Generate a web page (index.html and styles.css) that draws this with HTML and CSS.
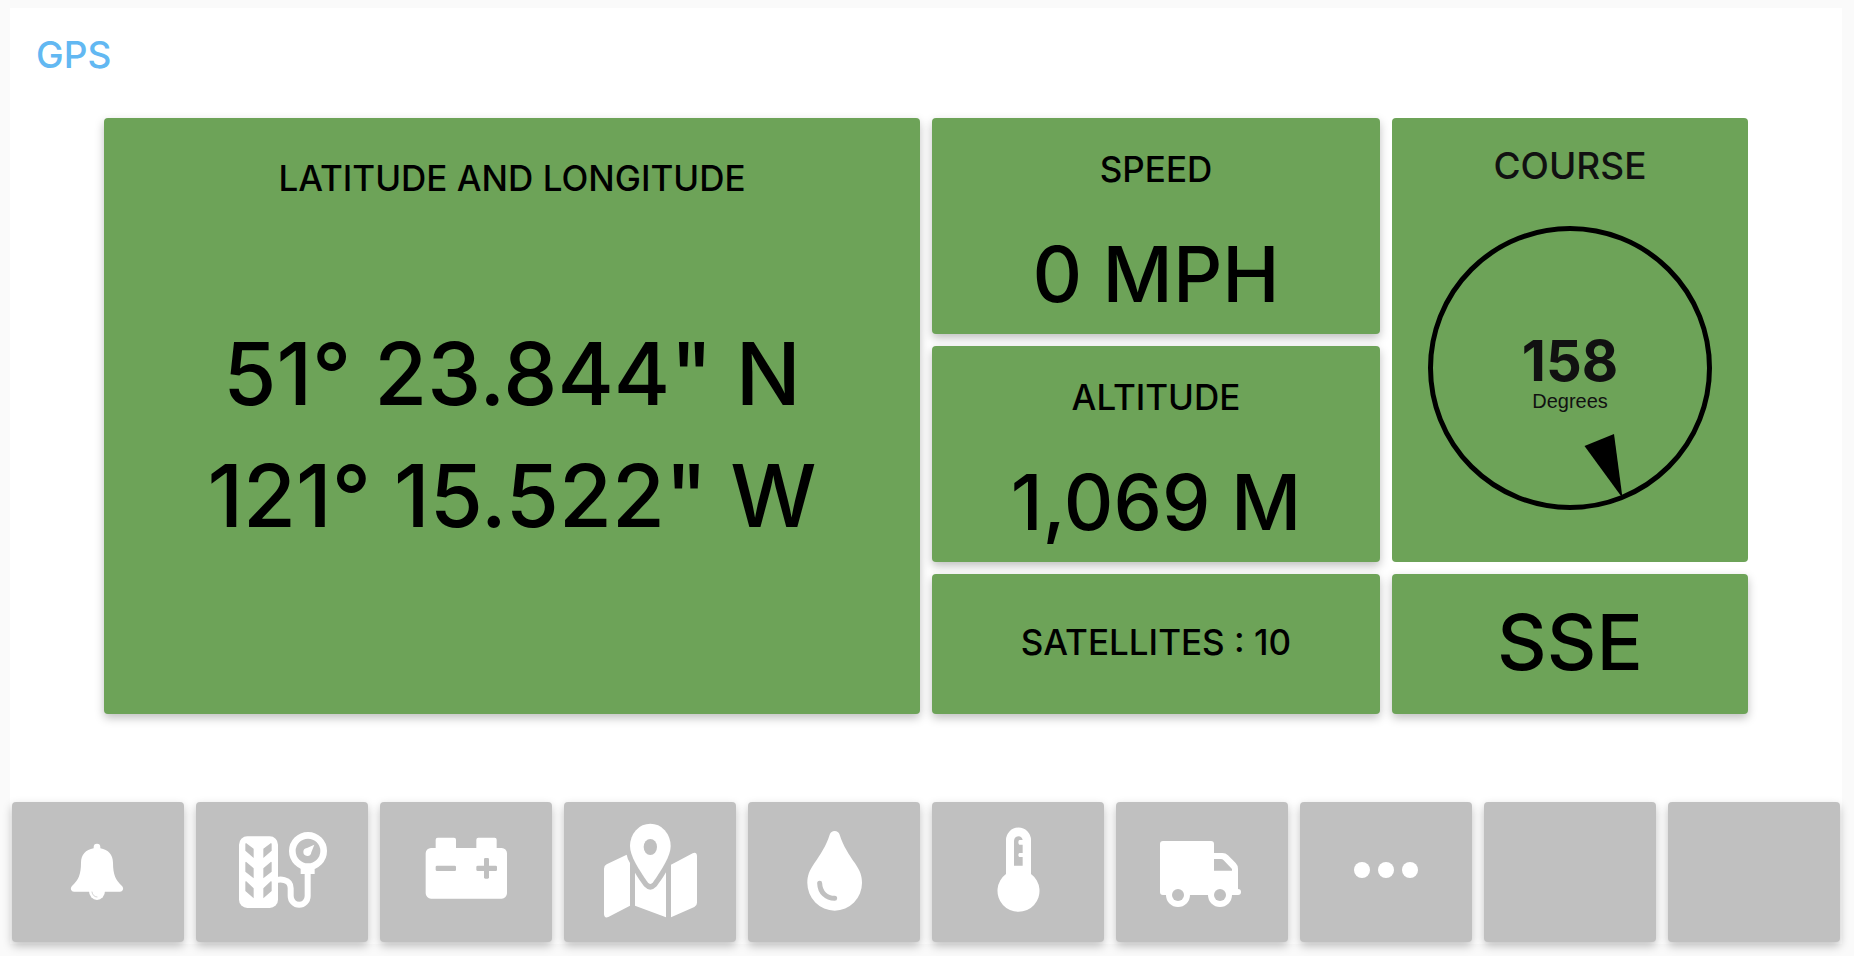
FILE: index.html
```html
<!DOCTYPE html>
<html lang="en">
<head>
    <meta charset="UTF-8">
    <title>GPS</title>
    <link rel="stylesheet" href="styles.css">
</head>
<body>
    <main class="screen">
        <header class="screen-header">
            <h1 class="screen-title">GPS</h1>
        </header>

        <section class="gauges">
            <div class="card position">
                <h2 class="card-title">LATITUDE AND LONGITUDE</h2>
                <div class="coordinates">
                    <div>51° 23.844" N</div>
                    <div>121° 15.522" W</div>
                </div>
            </div>

            <div class="card reading">
                <h2 class="card-title">SPEED</h2>
                <div class="value">0 MPH</div>
            </div>

            <div class="card course">
                <h2 class="course-title">COURSE</h2>
                <div class="compass">
                    <svg class="compass-dial" viewBox="0 0 284 284">
                        <circle cx="142" cy="142" r="139.5" fill="none" stroke="#000" stroke-width="5"/>
                        <path d="M156.500 220L186 208L194.500 272z"/>
                    </svg>
                    <div class="compass-label">
                        <div class="heading">158</div>
                        <div class="unit">Degrees</div>
                    </div>
                </div>
            </div>

            <div class="card reading">
                <h2 class="card-title">ALTITUDE</h2>
                <div class="value">1,069 M</div>
            </div>

            <div class="card centered">
                <div class="satellites">SATELLITES : 10</div>
            </div>

            <div class="card centered">
                <div class="value">SSE</div>
            </div>
        </section>

        <nav class="toolbar">
            <button class="tool" aria-label="Alerts">
                <svg class="icon" viewBox="144 96 300 300">
                    <path d="M291 161a10 10 0 0 1 10 10v4c24 4 38 20 38 43c0 36 8 52 27 70c7 8 2 17-6 17H222c-8 0-13-9-6-17c19-18 27-34 27-70c0-23 14-39 38-43v-4a10 10 0 0 1 10-10z"/>
                    <path d="M267 303h48a24 27 0 0 1-48 0z"/>
                    <path class="cut-line" stroke-width="2" d="M276 306q2 14 15 15"/>
                </svg>
            </button>
            <button class="tool" aria-label="Tire pressure">
                <svg class="icon" viewBox="696 96 300 300">
                    <rect x="717" y="139" width="117" height="215" rx="25"/>
                    <path class="cut" d="M738 159l23 17v28l-25-22v-21zM738 215l23 20v30l-25-20v-28zM738 273l23 22v30l-25-22v-28zM813 159l-23 17v28l25-22v-21zM813 215l-23 20v30l25-20v-28zM813 273l-23 22v30l25-22v-28z"/>
                    <circle cx="924" cy="183" r="47" fill="none" stroke="#fff" stroke-width="20"/>
                    <path d="M943 164l-9 23a12 12 0 1 1-13-13zM902 229h42v23h-42z"/>
                    <path fill="none" stroke="#fff" stroke-width="18" d="M825 273c12-7 47-7 47 22v23a25 26 0 0 0 51 0v-68"/>
                </svg>
            </button>
            <button class="tool" aria-label="Battery">
                <svg class="icon" viewBox="138 96 300 300">
                    <path d="M203 143h49a6 6 0 0 1 6 6v25h61v-25a6 6 0 0 1 6-6h49a6 6 0 0 1 6 6v25h15a16 16 0 0 1 16 16v120a16 16 0 0 1-16 16H183a16 16 0 0 1-16-16V190a16 16 0 0 1 16-16h14v-25a6 6 0 0 1 6-6z"/>
                    <rect class="cut" x="197" y="227" width="61" height="16" rx="4"/>
                    <rect class="cut" x="319" y="227" width="62" height="16" rx="4"/>
                    <rect class="cut" x="342" y="204" width="15" height="62" rx="4"/>
                </svg>
            </button>
            <button class="tool" aria-label="Map">
                <svg class="icon" viewBox="690 96 300 300">
                    <path d="M841 101a61 67 0 0 1 61 67c0 30-26 70-53 109q-8 10-16 0c-27-39-53-79-53-109a61 67 0 0 1 61-67z"/>
                    <ellipse class="cut" cx="841" cy="171" rx="20" ry="24"/>
                    <path d="M770 194q2 12 10 25v128l-65 34q-12 5-13-8V236q0-9 8-13zM795 248c8 14 18 28 27 41q19 20 38 0c10-14 19-26 28-42v135l-93-35zM903 224l65-34q12-5 13 8v140q0 9-8 13l-70 31z"/>
                </svg>
            </button>
            <button class="tool" aria-label="Water">
                <svg class="icon" viewBox="132 96 300 300">
                    <path d="M269 134q4-11 15-11t15 11c11 35 27 57 46 86c15 22 21 37 21 59a82 83 0 0 1-164 0c0-22 6-37 21-59c19-29 35-51 46-86z"/>
                    <path class="cut-line" stroke-width="15" d="M239 280c1 28 20 44 45 45"/>
                </svg>
            </button>
            <button class="tool" aria-label="Temperature">
                <svg class="icon" viewBox="684 96 300 300">
                    <path d="M798 150a37 37 0 0 1 75 0v102a63 63 0 1 1-75 0z"/>
                    <path class="cut" d="M822 227v-75q2-13 14-13q9 0 12 11h-10q-3 1-3 7t3 7h10v25h-10q-3 1-3 6t3 6h10v26z"/>
                </svg>
            </button>
            <button class="tool" aria-label="Vehicle">
                <svg class="icon" viewBox="126 96 300 300">
                    <path fill-rule="evenodd" d="M159 153h144a9 9 0 0 1 9 9v27h25q10 0 17 7l23 23q7 7 7 18v60a9 9 0 0 1 0 18H159a9 9 0 0 1-9-9V162a9 9 0 0 1 9-9zM312 207v35h54v-5l-25-26q-4-4-8-4z"/>
                    <circle cx="204" cy="315" r="36"/>
                    <circle cx="330" cy="315" r="36"/>
                    <circle class="cut" cx="204" cy="315" r="18"/>
                    <circle class="cut" cx="330" cy="315" r="18"/>
                </svg>
            </button>
            <button class="tool" aria-label="More">
                <svg class="icon" viewBox="678 96 300 300">
                    <circle cx="756" cy="240" r="24"/>
                    <circle cx="828" cy="240" r="24"/>
                    <circle cx="900" cy="240" r="24"/>
                </svg>
            </button>
            <button class="tool" aria-label="Empty slot"></button>
            <button class="tool" aria-label="Empty slot"></button>
        </nav>
    </main>
</body>
</html>
```
FILE: styles.css
```css
* {
    box-sizing: border-box;
}
body {
    margin: 0;
    padding: 8px 12px 12px 10px;
    background-color: #fafafa;
    color: #000;
    font-family: Inter, "Liberation Sans", sans-serif;
    font-weight: 500;
}
h1, h2 {
    margin: 0;
    font-weight: 500;
}
.screen {
    display: flex;
    flex-direction: column;
    min-height: calc(100vh - 20px);
    background-color: #fff;
}
.screen-header {
    padding: 24px 26px 40px;
}
.screen-title {
    font-size: 37px;
    line-height: 46px;
    color: #62b8f2;
}
.gauges {
    display: grid;
    grid-template-columns: 816fr 448fr 356fr;
    grid-template-rows: 216px 216px 140px;
    gap: 12px;
    margin: 0 94px;
}
.card {
    display: flex;
    flex-direction: column;
    align-items: center;
    background-color: #6da358;
    border-radius: 4px;
    box-shadow: 0 4px 10px rgba(0, 0, 0, 0.25);
}
.card-title,
.satellites {
    font-size: 35px;
    line-height: 56px;
}
.position {
    grid-row: span 3;
    padding: 32px 0 50px;
}
.coordinates {
    display: flex;
    flex: 1;
    flex-direction: column;
    justify-content: center;
    font-size: 86px;
    line-height: 122px;
    text-align: center;
}
.reading {
    padding-top: 23px;
    gap: 27px;
}
.centered {
    justify-content: center;
    padding-bottom: 4px;
}
.value {
    font-size: 77px;
    line-height: 100px;
}
.course {
    grid-row: span 2;
    padding-top: 20px;
    gap: 32px;
    box-shadow: none;
    color: #111;
}
.course-title {
    font-size: 37px;
    line-height: 56px;
}
.compass {
    display: grid;
    width: 284px;
    height: 284px;
}
.compass-dial,
.compass-label {
    grid-area: 1 / 1;
}
.compass-label {
    padding-top: 105px;
    text-align: center;
}
.heading {
    font-size: 56px;
    font-weight: 700;
    line-height: 60px;
}
.unit {
    font-family: "Liberation Sans", Arial, sans-serif;
    font-size: 20px;
    font-weight: 400;
    line-height: 20px;
}
.toolbar {
    display: grid;
    grid-template-columns: repeat(10, 1fr);
    gap: 12px;
    margin-top: auto;
    padding: 2px;
}
.tool {
    display: flex;
    align-items: center;
    justify-content: center;
    height: 140px;
    padding: 0;
    border: none;
    border-radius: 4px;
    background-color: #c0c0c0;
    box-shadow: 0 4px 10px rgba(0, 0, 0, 0.25);
    cursor: pointer;
}
.icon {
    width: 100px;
    height: 100px;
    fill: #fff;
}
.cut {
    fill: #c0c0c0;
}
.cut-line {
    fill: none;
    stroke: #c0c0c0;
    stroke-linecap: round;
}
```
